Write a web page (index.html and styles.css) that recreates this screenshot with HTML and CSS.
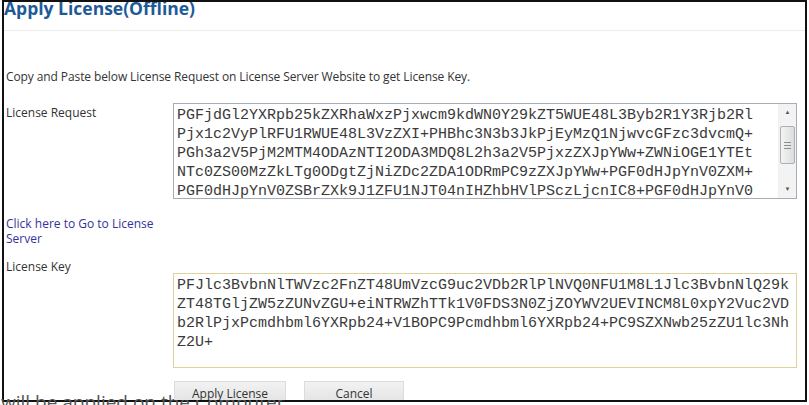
FILE: index.html
```html
<!DOCTYPE html>
<html lang="en">
<head>
    <meta charset="utf-8">
    <title>Apply License(Offline)</title>
    <link rel="stylesheet" href="styles.css">
</head>
<body>
    <div class="behind">will be applied on the Computer</div>

    <div class="dialog">
        <div class="head">
            <span class="title">Apply License(Offline)</span>
        </div>

        <p class="intro">Copy and Paste below License Request on License Server Website to get License Key.</p>

        <div class="row request-row">
            <label class="label" for="licenseRequest">License Request</label>
            <div class="box request" id="licenseRequest">
                <div class="box-text">PGFjdGl2YXRpb25kZXRhaWxzPjxwcm9kdWN0Y29kZT5WUE48L3Byb2R1Y3Rjb2Rl
Pjx1c2VyPlRFU1RWUE48L3VzZXI+PHBhc3N3b3JkPjEyMzQ1NjwvcGFzc3dvcmQ+
PGh3a2V5PjM2MTM4ODAzNTI2ODA3MDQ8L2h3a2V5PjxzZXJpYWw+ZWNiOGE1YTEt
NTc0ZS00MzZkLTg0ODgtZjNiZDc2ZDA1ODRmPC9zZXJpYWw+PGF0dHJpYnV0ZXM+
PGF0dHJpYnV0ZSBrZXk9J1ZFU1NJT04nIHZhbHVlPSczLjcnIC8+PGF0dHJpYnV0</div>
                <div class="scroll">
                    <div class="arrow">&#9650;</div>
                    <div class="track">
                        <div class="thumb"><span></span><span></span><span></span></div>
                    </div>
                    <div class="arrow">&#9660;</div>
                </div>
            </div>
        </div>

        <div class="row link-row">
            <a class="link" href="#">Click here to Go to License Server</a>
        </div>

        <div class="key-label">License Key</div>

        <div class="row">
            <span></span>
            <div class="box key">
                <div class="box-text">PFJlc3BvbnNlTWVzc2FnZT48UmVzcG9uc2VDb2RlPlNVQ0NFU1M8L1Jlc3BvbnNlQ29k
ZT48TGljZW5zZUNvZGU+eiNTRWZhTTk1V0FDS3N0ZjZOYWV2UEVINCM8L0xpY2Vuc2VD
b2RlPjxPcmdhbml6YXRpb24+V1BOPC9Pcmdhbml6YXRpb24+PC9SZXNwb25zZU1lc3Nh
Z2U+</div>
            </div>
        </div>

        <div class="row buttons-row">
            <span></span>
            <div class="buttons">
                <button type="button" class="btn apply">Apply License</button>
                <button type="button" class="btn cancel">Cancel</button>
            </div>
        </div>
    </div>
</body>
</html>
```

FILE: styles.css
```css
body {
    margin: 0;
    background-color: #fff;
    color: #333;
    font-family: "Open Sans", Arial, sans-serif;
    font-size: 12px;
    position: relative;
    overflow: hidden;
    height: 405px;
}
.dialog {
    margin-left: 2px;
    width: 801px;
    height: 398px;
    border: 2px solid #111;
    overflow: hidden;
    background-color: transparent;
}
.head {
    height: 28px;
    border-bottom: 1px solid #ececec;
}
.title {
    display: inline-block;
    margin-top: -6px;
    margin-left: -2px;
    padding: 0 6px 2px 2px;
    background-color: #fff;
    color: #1d5a97;
    font-family: "Open Sans", Arial, sans-serif;
    font-weight: bold;
    font-size: 17.5px;
    line-height: 23px;
}
.intro {
    margin: 38px 0 0 2px;
    line-height: 16px;
    letter-spacing: -0.1px;
}
.row {
    display: grid;
    grid-template-columns: 169px 624px;
    align-items: start;
}
.request-row {
    margin-top: 18px;
}
.label {
    padding: 2px 0 0 2px;
    line-height: 16px;
}
.request {
    margin-top: 0;
}
.box {
    display: flex;
    height: 94px;
    border: 1px solid #a7adb6;
    background-color: #fff;
}
.key {
    border-color: #ddd29a;
    height: 93px;
}
.box-text {
    flex: 1;
    padding: 2px 0 0 3px;
    white-space: pre;
    overflow: hidden;
    font-family: "Liberation Mono", "Courier New", monospace;
    font-size: 15px;
    line-height: 19px;
    color: #3a3a3a;
}
.scroll {
    width: 17px;
    display: flex;
    flex-direction: column;
    background-color: #f3f3f3;
    border-left: 1px solid #f0f0f0;
}
.arrow {
    height: 17px;
    font-size: 6px;
    line-height: 17px;
    text-align: center;
    color: #555;
}
.track {
    flex: 1;
    padding-top: 5px;
}
.thumb {
    height: 36px;
    margin: 0 1px;
    border: 1px solid #a9b0b8;
    border-radius: 2px;
    background: linear-gradient(to right, #f4f4f4, #dcdcdc);
    display: flex;
    flex-direction: column;
    justify-content: center;
    align-items: center;
    gap: 2px;
}
.thumb span {
    display: block;
    width: 7px;
    height: 1px;
    background-color: #8a8f96;
}
.link-row {
    margin-top: 17px;
}
.link {
    padding-left: 2px;
    width: 150px;
    color: #33339a;
    text-decoration: none;
    line-height: 15px;
}
.key-label {
    margin-top: 13px;
    padding-left: 2px;
    line-height: 16px;
}
.key-label + .row {
    margin-top: -2px;
}
.buttons-row {
    margin-top: 13px;
}
.buttons {
    display: flex;
    gap: 18px;
    padding-left: 1px;
    position: relative;
    z-index: 2;
}
.btn {
    height: 24px;
    border: 1px solid #dcdcdc;
    background: linear-gradient(#f2f2f2, #e2e2e2);
    color: #333;
    font-family: "Open Sans", Arial, sans-serif;
    font-size: 12px;
    padding: 0;
}
.apply {
    width: 112px;
}
.cancel {
    width: 100px;
}
.behind {
    position: absolute;
    left: 1px;
    top: 390px;
    z-index: 1;
    font-family: "Open Sans", Arial, sans-serif;
    font-size: 19px;
    line-height: 24px;
    color: #555;
    white-space: nowrap;
}
```
